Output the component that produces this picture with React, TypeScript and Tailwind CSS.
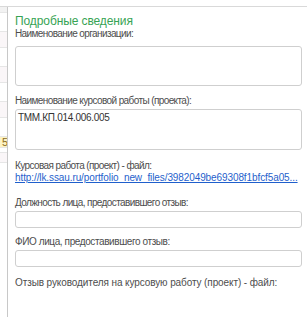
const rows = [
  { h: "h-[6px]", bg: "bg-[#f2f2f2]" },
  { h: "h-[19px]", bg: "bg-white" },
  { h: "h-[16px]", bg: "bg-[#faf6f8]" },
  { h: "h-[19px]", bg: "bg-white" },
  { h: "h-[16px]", bg: "bg-[#faf6f8]" },
  { h: "h-[19px]", bg: "bg-white" },
  { h: "h-[16px]", bg: "bg-[#faf6f8]" },
  { h: "h-[19px]", bg: "bg-white" },
];

function Label({ children, track = "tracking-[-0.4px]" }: { children: React.ReactNode; track?: string }) {
  return <div className={`text-[10px] leading-[12px] ${track} text-[#4d4d4d] whitespace-nowrap`}>{children}</div>;
}

export default function App() {
  return (
    <div className="w-[307px] h-[317px] overflow-hidden bg-white font-['Liberation_Sans',Arial,sans-serif]">
      <div className="h-[6px]" />
      <div className="flex h-[311px] border-t border-[#d9d9d9]">
        {/* table strip cut off at the left */}
        <div className="w-[8px] shrink-0 border-r border-[#c8c8c8] flex flex-col">
          {rows.map((r, i) => (
            <div key={i} className={`${r.h} ${r.bg} border-b border-[#e6e6e6]`} />
          ))}
          <div className="h-[11px] bg-[#fdf3c4] border-b border-[#e6e6e6] text-[11px] leading-[11px] text-[#8a6d1f] flex justify-end overflow-hidden">
            <span className="-mr-[1px]">5</span>
          </div>
          <div className="h-[5px] border-b border-[#e6e6e6]" />
          <div className="h-[10px] bg-[#faf6f8] border-b border-[#e6e6e6]" />
        </div>

        <div className="flex-1 min-w-0 pl-[7px] pr-[5px] pt-[7px]">
          <div className="text-[12px] leading-[14px] tracking-[-0.1px] text-[#37a354]">Подробные сведения</div>
          <Label track="tracking-[-0.6px]">Наименование организации:</Label>
          <div className="mt-[6px] h-[40px] rounded-[3px] border border-[#cfcfcf]" />

          <div className="mt-[9px]"><Label track="tracking-[-0.6px]">Наименование курсовой работы (проекта):</Label></div>
          <div className="mt-[2px] h-[41px] rounded-[3px] border border-[#cfcfcf] px-[2px] pt-[2px] text-[10px] leading-[12px] tracking-[-0.3px] text-[#333]">
            ТММ.КП.014.006.005
          </div>

          <div className="mt-[10px]"><Label track="tracking-[-0.6px]">Курсовая работа (проект) - файл:</Label></div>
          <div className="text-[10px] leading-[12px] tracking-[-0.1px] text-[#1f5fcc] underline whitespace-nowrap">
            http://lk.ssau.ru/portfolio_new_files/3982049be69308f1bfcf5a05...
          </div>

          <div className="mt-[13px]"><Label track="tracking-[-0.6px]">Должность лица, предоставившего отзыв:</Label></div>
          <div className="mt-[2px] h-[17px] rounded-[3px] border border-[#cfcfcf]" />

          <div className="mt-[8px]"><Label>ФИО лица, предоставившего отзыв:</Label></div>
          <div className="mt-[2px] h-[17px] rounded-[3px] border border-[#cfcfcf]" />

          <div className="mt-[10px]"><Label track="tracking-[-0.1px]">Отзыв руководителя на курсовую работу (проект) - файл:</Label></div>
        </div>
      </div>
    </div>
  );
}
